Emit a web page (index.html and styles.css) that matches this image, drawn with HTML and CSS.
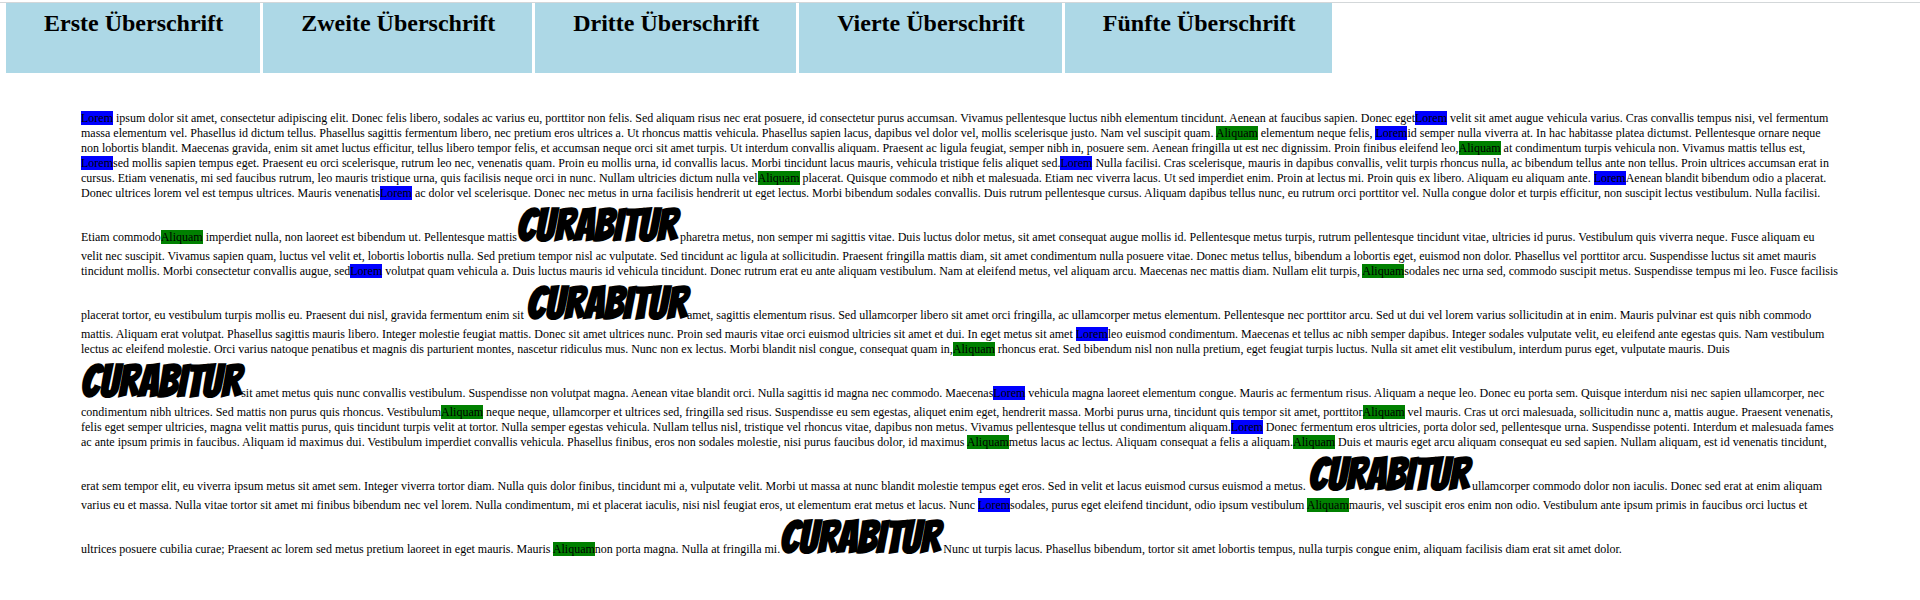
FILE: index.html
```html
<!DOCTYPE html>
<html lang="de">
<head>
<meta charset="utf-8">
<title>Überschriften</title>
<link rel="stylesheet" href="styles.css">
</head>
<body>
<header class="topbar">
<h2 class="tab">Erste Überschrift</h2>
<h2 class="tab">Zweite Überschrift</h2>
<h2 class="tab">Dritte Überschrift</h2>
<h2 class="tab">Vierte Überschrift</h2>
<h2 class="tab">Fünfte Überschrift</h2>
</header>
<main class="content">
<p class="text"><span class="lorem">Lorem</span> ipsum dolor sit amet, consectetur adipiscing elit. Donec felis libero, sodales ac varius eu, porttitor non felis. Sed aliquam risus nec erat posuere, id consectetur purus accumsan. Vivamus pellentesque luctus nibh elementum tincidunt. Aenean at faucibus sapien. Donec eget<span class="lorem">Lorem</span> velit sit amet augue vehicula varius. Cras convallis tempus nisi, vel fermentum
massa elementum vel. Phasellus id dictum tellus. Phasellus sagittis fermentum libero, nec pretium eros ultrices a. Ut rhoncus mattis vehicula. Phasellus sapien lacus, dapibus vel dolor vel, mollis scelerisque justo. Nam vel suscipit quam. <span class="aliquam">Aliquam</span> elementum neque felis, <span class="lorem">Lorem</span>id semper nulla viverra at. In hac habitasse platea dictumst. Pellentesque ornare neque
non lobortis blandit. Maecenas gravida, enim sit amet luctus efficitur, tellus libero tempor felis, et accumsan neque orci sit amet turpis. Ut interdum convallis aliquam. Praesent ac ligula feugiat, semper nibh in, posuere sem. Aenean fringilla ut est nec dignissim. Proin finibus eleifend leo,<span class="aliquam">Aliquam</span> at condimentum turpis vehicula non. Vivamus mattis tellus est,
<span class="lorem">Lorem</span>sed mollis sapien tempus eget. Praesent eu orci scelerisque, rutrum leo nec, venenatis quam. Proin eu mollis urna, id convallis lacus. Morbi tincidunt lacus mauris, vehicula tristique felis aliquet sed.<span class="lorem">Lorem</span> Nulla facilisi. Cras scelerisque, mauris in dapibus convallis, velit turpis rhoncus nulla, ac bibendum tellus ante non tellus. Proin ultrices accumsan erat in
cursus. Etiam venenatis, mi sed faucibus rutrum, leo mauris tristique urna, quis facilisis neque orci in nunc. Nullam ultricies dictum nulla vel<span class="aliquam">Aliquam</span> placerat. Quisque commodo et nibh et malesuada. Etiam nec viverra lacus. Ut sed imperdiet enim. Proin at lectus mi. Proin quis ex libero. Aliquam eu aliquam ante. <span class="lorem">Lorem</span>Aenean blandit bibendum odio a placerat.
Donec ultrices lorem vel est tempus ultrices. Mauris venenatis<span class="lorem">Lorem</span> ac dolor vel scelerisque. Donec nec metus in urna facilisis hendrerit ut eget lectus. Morbi bibendum sodales convallis. Duis rutrum pellentesque cursus. Aliquam dapibus tellus nunc, eu rutrum orci porttitor vel. Nulla congue dolor et turpis efficitur, non suscipit lectus vestibulum. Nulla facilisi.
Etiam commodo<span class="aliquam">Aliquam</span> imperdiet nulla, non laoreet est bibendum ut. Pellentesque mattis<span class="curabitur">CURABITUR</span> pharetra metus, non semper mi sagittis vitae. Duis luctus dolor metus, sit amet consequat augue mollis id. Pellentesque metus turpis, rutrum pellentesque tincidunt vitae, ultricies id purus. Vestibulum quis viverra neque. Fusce aliquam eu
velit nec suscipit. Vivamus sapien quam, luctus vel velit et, lobortis lobortis nulla. Sed pretium tempor nisl ac vulputate. Sed tincidunt ac ligula at sollicitudin. Praesent fringilla mattis diam, sit amet condimentum nulla posuere vitae. Donec metus tellus, bibendum a lobortis eget, euismod non dolor. Phasellus vel porttitor arcu. Suspendisse luctus sit amet mauris
tincidunt mollis. Morbi consectetur convallis augue, sed<span class="lorem">Lorem</span> volutpat quam vehicula a. Duis luctus mauris id vehicula tincidunt. Donec rutrum erat eu ante aliquam vestibulum. Nam at eleifend metus, vel aliquam arcu. Maecenas nec mattis diam. Nullam elit turpis, <span class="aliquam">Aliquam</span>sodales nec urna sed, commodo suscipit metus. Suspendisse tempus mi leo. Fusce facilisis
placerat tortor, eu vestibulum turpis mollis eu. Praesent dui nisl, gravida fermentum enim sit <span class="curabitur">CURABITUR</span>amet, sagittis elementum risus. Sed ullamcorper libero sit amet orci fringilla, ac ullamcorper metus elementum. Pellentesque nec porttitor arcu. Sed ut dui vel lorem varius sollicitudin at in enim. Mauris pulvinar est quis nibh commodo
mattis. Aliquam erat volutpat. Phasellus sagittis mauris libero. Integer molestie feugiat mattis. Donec sit amet ultrices nunc. Proin sed mauris vitae orci euismod ultricies sit amet et dui. In eget metus sit amet <span class="lorem">Lorem</span>leo euismod condimentum. Maecenas et tellus ac nibh semper dapibus. Integer sodales vulputate velit, eu eleifend ante egestas quis. Nam vestibulum
lectus ac eleifend molestie. Orci varius natoque penatibus et magnis dis parturient montes, nascetur ridiculus mus. Nunc non ex lectus. Morbi blandit nisl congue, consequat quam in,<span class="aliquam">Aliquam</span> rhoncus erat. Sed bibendum nisl non nulla pretium, eget feugiat turpis luctus. Nulla sit amet elit vestibulum, interdum purus eget, vulputate mauris. Duis
<span class="curabitur">CURABITUR</span>sit amet metus quis nunc convallis vestibulum. Suspendisse non volutpat magna. Aenean vitae blandit orci. Nulla sagittis id magna nec commodo. Maecenas<span class="lorem">Lorem</span> vehicula magna laoreet elementum congue. Mauris ac fermentum risus. Aliquam a neque leo. Donec eu porta sem. Quisque interdum nisi nec sapien ullamcorper, nec
condimentum nibh ultrices. Sed mattis non purus quis rhoncus. Vestibulum<span class="aliquam">Aliquam</span> neque neque, ullamcorper et ultrices sed, fringilla sed risus. Suspendisse eu sem egestas, aliquet enim eget, hendrerit massa. Morbi purus urna, tincidunt quis tempor sit amet, porttitor<span class="aliquam">Aliquam</span> vel mauris. Cras ut orci malesuada, sollicitudin nunc a, mattis augue. Praesent venenatis,
felis eget semper ultricies, magna velit mattis purus, quis tincidunt turpis velit at tortor. Nulla semper egestas vehicula. Nullam tellus nisl, tristique vel rhoncus vitae, dapibus non metus. Vivamus pellentesque tellus ut condimentum aliquam.<span class="lorem">Lorem</span> Donec fermentum eros ultricies, porta dolor sed, pellentesque urna. Suspendisse potenti. Interdum et malesuada fames
ac ante ipsum primis in faucibus. Aliquam id maximus dui. Vestibulum imperdiet convallis vehicula. Phasellus finibus, eros non sodales molestie, nisi purus faucibus dolor, id maximus <span class="aliquam">Aliquam</span>metus lacus ac lectus. Aliquam consequat a felis a aliquam.<span class="aliquam">Aliquam</span> Duis et mauris eget arcu aliquam consequat eu sed sapien. Nullam aliquam, est id venenatis tincidunt,
erat sem tempor elit, eu viverra ipsum metus sit amet sem. Integer viverra tortor diam. Nulla quis dolor finibus, tincidunt mi a, vulputate velit. Morbi ut massa at nunc blandit molestie tempus eget eros. Sed in velit et lacus euismod cursus euismod a metus. <span class="curabitur">CURABITUR</span> ullamcorper commodo dolor non iaculis. Donec sed erat at enim aliquam
varius eu et massa. Nulla vitae tortor sit amet mi finibus bibendum nec vel lorem. Nulla condimentum, mi et placerat iaculis, nisi nisl feugiat eros, ut elementum erat metus et lacus. Nunc <span class="lorem">Lorem</span>sodales, purus eget eleifend tincidunt, odio ipsum vestibulum <span class="aliquam">Aliquam</span>mauris, vel suscipit eros enim non odio. Vestibulum ante ipsum primis in faucibus orci luctus et
ultrices posuere cubilia curae; Praesent ac lorem sed metus pretium laoreet in eget mauris. Mauris <span class="aliquam">Aliquam</span>non porta magna. Nulla at fringilla mi.<span class="curabitur">CURABITUR</span> Nunc ut turpis lacus. Phasellus bibendum, tortor sit amet lobortis tempus, nulla turpis congue enim, aliquam facilisis diam erat sit amet dolor.</p>
</main>
</body>
</html>
```

FILE: styles.css
```css
body {
  margin: 0;
  padding-top: 2px;
  background: #fff;
  color: #000;
  font-family: "Liberation Serif", "Times New Roman", serif;
}

.topbar {
  display: flex;
  gap: 3px;
  padding-left: 6px;
  border-top: 1px solid #d3d7d9;
}

.tab {
  box-sizing: border-box;
  height: 70px;
  margin: 0;
  padding: 6px 37px 0 38px;
  background: lightblue;
  font-size: 24px;
  line-height: 28px;
  font-weight: bold;
  white-space: nowrap;
}

.content {
  padding: 38px 82px 38px 81px;
}

.text {
  margin: 0;
  font-size: 12px;
  line-height: 15px;
}

.lorem {
  background: blue;
}

.aliquam {
  background: green;
}

.curabitur {
  font-family: Bangers, Roboto, sans-serif;
  font-size: 45px;
  line-height: 48px;
  font-weight: bold;
}
```
